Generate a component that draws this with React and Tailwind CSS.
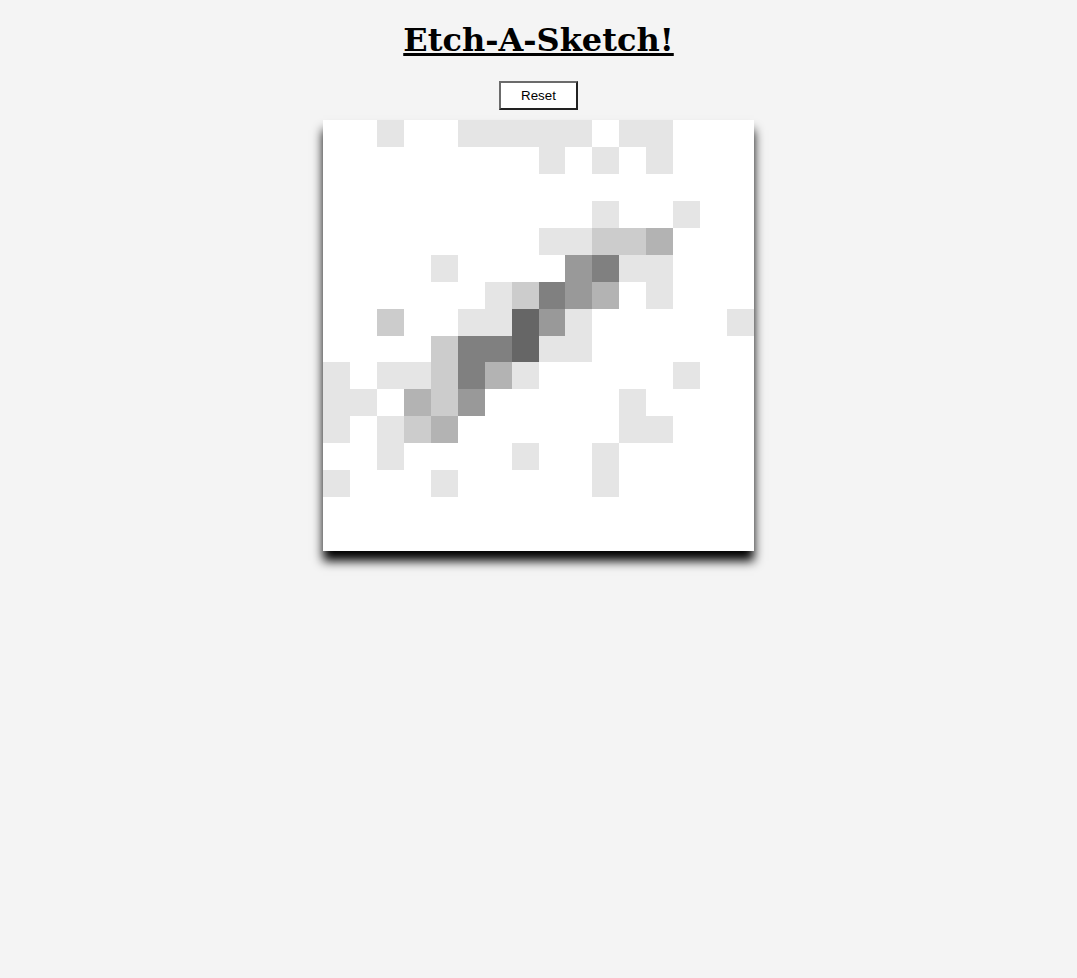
import React from 'react';

// each char is one cell: '.' untouched, digits get darker with every pass
const board = [
  '..1..11111.11...',
  '........1.1.1...',
  '................',
  '..........1..1..',
  '........11223...',
  '....1....4511...',
  '......12543.1...',
  '..2..11641.....1',
  '....255611......',
  '1.112531.....1..',
  '11.324.....1....',
  '1.123......11...',
  '..1....1..1.....',
  '1...1.....1.....',
  '................',
  '................',
];

const shades = {
  '.': 'bg-white',
  '1': 'bg-[#e5e5e5]',
  '2': 'bg-[#cccccc]',
  '3': 'bg-[#b3b3b3]',
  '4': 'bg-[#999999]',
  '5': 'bg-[#808080]',
  '6': 'bg-[#666666]',
};

const App = () => {
  return (
    <div className="min-h-[978px] bg-[#f4f4f4] flex flex-col items-center">
      <h1 className="mt-[21px] mb-[22px] text-[32px] leading-[normal] font-bold underline text-black font-['DejaVu_Serif',serif]">
        Etch-A-Sketch!
      </h1>

      <button className="w-[79px] h-[29px] bg-white text-[13.33px] text-black font-['Liberation_Sans',Arial,sans-serif] border-2 border-t-[#6b6b6b] border-l-[#6b6b6b] border-b-[#222222] border-r-[#222222]">
        Reset
      </button>

      <div className="mt-[10px] w-[431px] h-[431px] grid grid-cols-16 grid-rows-16 shadow-[0_10px_10px_black]">
        {board.map((row, r) =>
          row.split('').map((c, i) => (
            <div key={`${r}-${i}`} className={shades[c]}></div>
          ))
        )}
      </div>
    </div>
  );
};

export default App;
